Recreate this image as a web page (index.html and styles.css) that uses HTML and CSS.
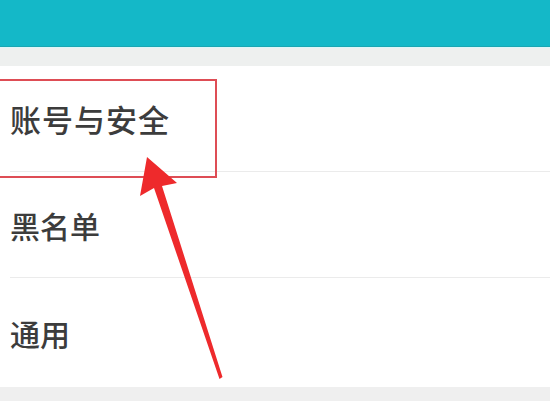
FILE: index.html
```html
<!DOCTYPE html>
<html lang="zh-CN">
<head>
<meta charset="utf-8">
<link rel="stylesheet" href="styles.css">
</head>
<body>
<div class="page">
  <header class="topbar"></header>
  <div class="gap-strip"></div>
  <ul class="menu">
    <li class="menu-item menu-item--wide">账号与安全</li>
    <li class="menu-item">黑名单</li>
    <li class="menu-item menu-item--last">通用</li>
  </ul>
  <div class="bottom-strip"></div>
  <div class="highlight-box"></div>
  <svg class="arrow" width="550" height="401" viewBox="0 0 550 401">
    <polygon fill="#ee2a2c" points="147,157 177,183 162,186 222.5,377 219.5,379 154,188 140,196"/>
  </svg>
</div>
</body>
</html>
```

FILE: styles.css
```css
html, body {
  margin: 0;
  padding: 0;
  background: #ffffff;
}
.page {
  position: relative;
  width: 550px;
  height: 401px;
  overflow: hidden;
  font-family: "Noto Sans CJK SC", "Noto Sans", sans-serif;
}
.topbar {
  height: 46px;
  background: #14b8c8;
  border-bottom: 1px solid #1aa6b2;
}
.gap-strip {
  height: 18px;
  background: #eef0ef;
  border-top: 1px solid #dff6f8;
}
.menu {
  list-style: none;
  margin: 0;
  padding: 0;
  background: #ffffff;
}
.menu-item {
  height: 105px;
  margin-left: 10px;
  display: flex;
  align-items: center;
  font-size: 30px;
  font-weight: 500;
  color: #3c3c3c;
  border-bottom: 1px solid #ebebeb;
}
.menu-item--wide {
  font-size: 31px;
  letter-spacing: 1px;
}
.menu-item--last {
  height: 109px;
  border-bottom: none;
}
.bottom-strip {
  height: 20px;
  background: #efefef;
}
.highlight-box {
  position: absolute;
  left: -2px;
  top: 79px;
  width: 215px;
  height: 95px;
  border: 2px solid #de4d55;
}
.arrow {
  position: absolute;
  left: 0;
  top: 0;
}
```
